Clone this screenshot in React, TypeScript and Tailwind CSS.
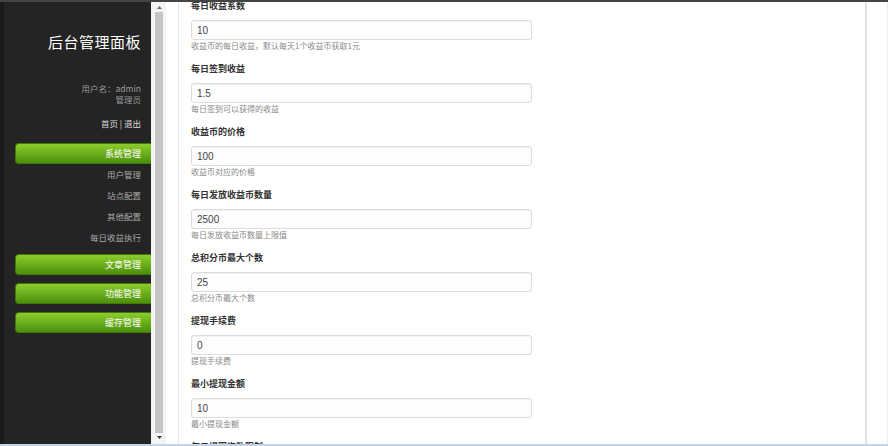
import React from "react";

const fields = [
  { label: "每日收益系数", value: "10", help: "收益币的每日收益，默认每天1个收益币获取1元" },
  { label: "每日签到收益", value: "1.5", help: "每日签到可以获得的收益" },
  { label: "收益币的价格", value: "100", help: "收益币对应的价格" },
  { label: "每日发放收益币数量", value: "2500", help: "每日发放收益币数量上限值" },
  { label: "总积分币最大个数", value: "25", help: "总积分币最大个数" },
  { label: "提现手续费", value: "0", help: "提现手续费" },
  { label: "最小提现金额", value: "10", help: "最小提现金额" },
  { label: "每日提现次数限制", value: "3", help: "每日提现次数限制" },
];

const cjk = { fontFamily: '"Noto Sans CJK SC", "Liberation Sans", sans-serif' };

function GreenBtn({ children }: { children: React.ReactNode }) {
  return (
    <div className="ml-[11px] h-[21px] rounded-l-[4px] border border-r-0 border-[#3f7a08] bg-linear-to-b from-[#8ccd2c] to-[#4b900a] pr-[10px] text-right text-[9px] leading-[19px] text-white">
      {children}
    </div>
  );
}

export default function App() {
  return (
    <div
      className="flex h-[446px] w-[888px] overflow-hidden border-t-2 border-b-2 border-t-[#444] border-b-[#c3d3e8] bg-white"
      style={cjk}
    >
      {/* Sidebar */}
      <div className="flex w-[151px] shrink-0 flex-col border-l-[4px] border-[#1a1a1a] bg-[#242424] pr-[10px] text-right">
        <div className="mt-[30px] text-[15px] leading-[20px] tracking-[0.5px] text-white">后台管理面板</div>
        <div className="mt-[31px] text-[8.5px] leading-[11px] text-[#9a9a9a]">
          用户名：admin
        </div>
        <div className="text-[8.5px] leading-[11px] text-[#9a9a9a]">管理员</div>
        <div className="mt-[13px] text-[8.5px] leading-[11px] text-[#dcdcdc]">首页 | 退出</div>
        <div className="-mr-[10px] mt-[14px] flex flex-col">
          <GreenBtn>系统管理</GreenBtn>
          <div className="flex flex-col pr-[10px] text-[8.5px] leading-[21px] text-[#a8a8a8]">
            <div>用户管理</div>
            <div>站点配置</div>
            <div>其他配置</div>
            <div>每日收益执行</div>
          </div>
          <div className="mt-[6px] flex flex-col gap-[8px]">
            <GreenBtn>文章管理</GreenBtn>
            <GreenBtn>功能管理</GreenBtn>
            <GreenBtn>缓存管理</GreenBtn>
          </div>
        </div>
      </div>

      {/* Scrollbar */}
      <div className="flex w-[15px] shrink-0 flex-col items-start bg-[#f4f4f4] pl-[4px]">
        <div className="flex h-[10px] w-[8px] items-center justify-center">
          <svg width="5" height="3" viewBox="0 0 5 3">
            <path d="M0 3 L2.5 0 L5 3 Z" fill="#6a6a6a" />
          </svg>
        </div>
        <div className="h-[421px] w-[8px] bg-[#c3c3c3]" />
        <div className="flex h-[8px] w-[8px] items-center justify-center">
          <svg width="5" height="3" viewBox="0 0 5 3">
            <path d="M0 0 L2.5 3 L5 0 Z" fill="#3a3a3a" />
          </svg>
        </div>
      </div>

      {/* Main */}
      <div className="flex flex-1 pl-[12px]">
        <div className="w-[689px] shrink-0 border-l border-r-2 border-l-[#e6e6e6] border-r-[#e2e2e2] pl-[12px]">
          <div className="-mt-[2px] flex flex-col">
            {fields.map((f) => (
              <div key={f.label} className="flex flex-col pb-[11px]">
                <div className="h-[12px] text-[9px] font-bold leading-[12px] text-[#333]">{f.label}</div>
                <div className="mt-[8px] flex h-[20px] w-[341px] items-center rounded-[3px] border border-[#dcdcdc] bg-[#fdfdfd] pl-[5px] text-[10px] text-[#444] shadow-[inset_0_1px_1px_rgba(0,0,0,0.05)]" style={{ fontFamily: '"Liberation Sans", Arial, sans-serif' }}>
                  {f.value}
                </div>
                <div className="h-[12px] text-[8px] leading-[12px] text-[#888]">{f.help}</div>
              </div>
            ))}
          </div>
        </div>
        <div className="flex-1 border-r border-[#eeeeee]" />
      </div>
    </div>
  );
}
